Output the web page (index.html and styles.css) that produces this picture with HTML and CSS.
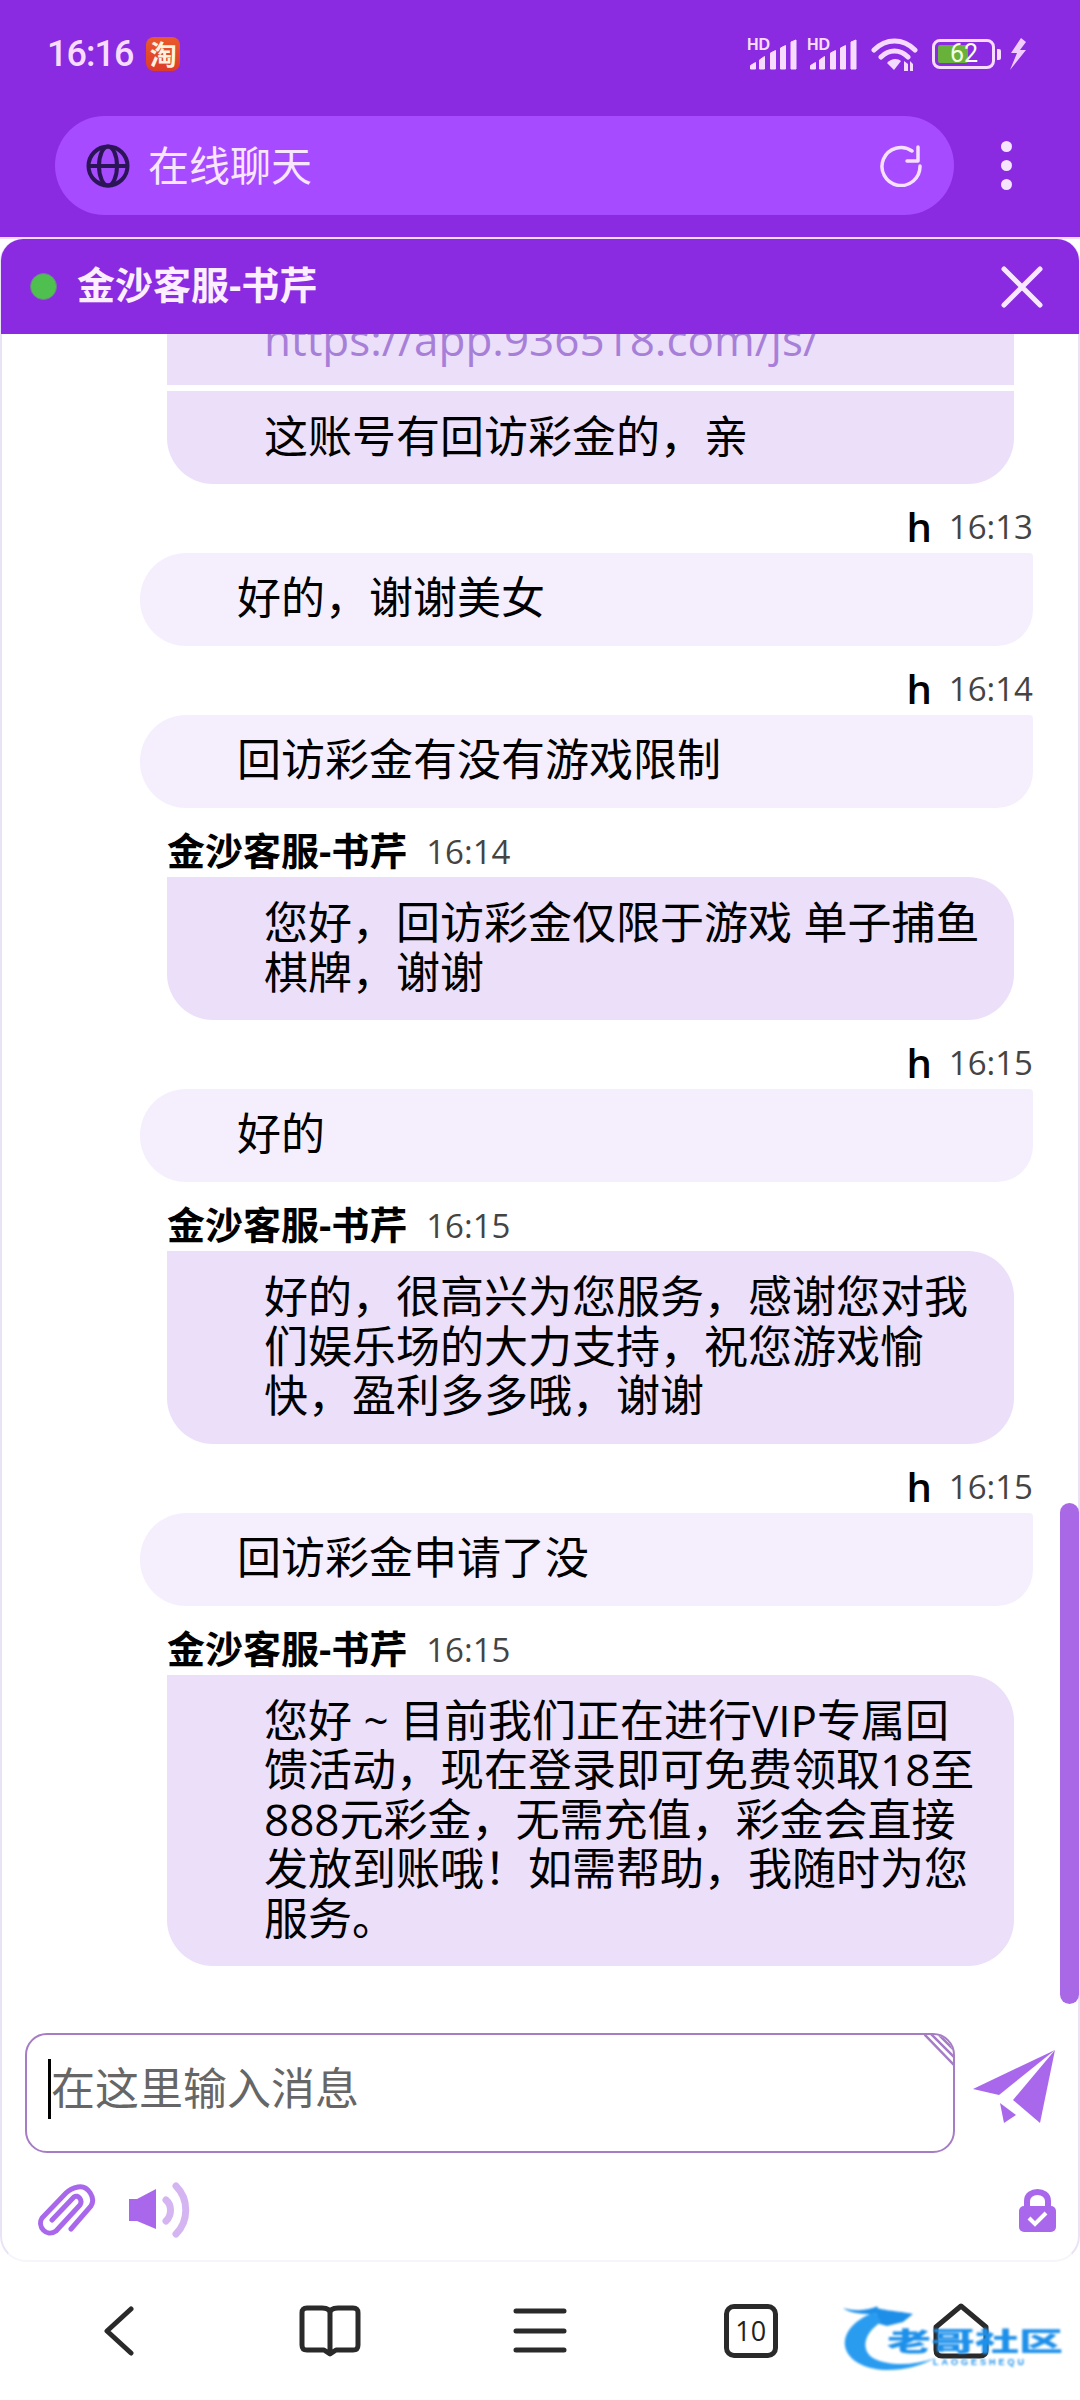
FILE: index.html
```html
<!DOCTYPE html>
<html lang="zh-CN">
<head>
  <meta charset="UTF-8" />
  <title>在线聊天</title>
  <link rel="stylesheet" href="styles.css">
</head>
<body>
  <div class="top">
    <div class="status">
      <div class="status-left">
        <span class="clock">16:16</span>
        <span class="taobao">淘</span>
      </div>
      <div class="status-right">
        <svg class="signal" width="52" height="34" viewBox="0 0 52 34">
          <text x="1" y="13" class="hd">HD</text>
          <path d="M4.5 32V28.5L9.5 25.5V32Z"/>
          <path d="M13.5 32V23L18.5 19.5V32Z"/>
          <path d="M24.5 32V16L29.5 13.5V32Z"/>
          <path d="M34.5 32V11L39.5 8.5V32Z"/>
          <path d="M45 32V5L50 3V32Z"/>
        </svg>
        <svg class="signal" width="52" height="34" viewBox="0 0 52 34">
          <text x="1" y="13" class="hd">HD</text>
          <path d="M4.5 32V28.5L9.5 25.5V32Z"/>
          <path d="M13.5 32V23L18.5 19.5V32Z"/>
          <path d="M24.5 32V16L29.5 13.5V32Z"/>
          <path d="M34.5 32V11L39.5 8.5V32Z"/>
          <path d="M45 32V5L50 3V32Z"/>
        </svg>
        <svg class="wifi" width="47" height="34" viewBox="0 0 47 34">
          <path d="M3 13C15 1 32 1 44 13M10 20C18 12 29 12 37 20" fill="none" stroke="#f5d9ff" stroke-width="5" stroke-linecap="round"/>
          <path d="M16 26C20 21 27 21 30 24L23 33Z" fill="#f5d9ff"/>
          <path d="M33 34V24L37 27V34ZM39 34V24L42 27V34" fill="#f5d9ff"/>
        </svg>
        <div class="battery">
          <div class="battery-body">
            <div class="battery-fill"></div>
            <span class="battery-num">62</span>
          </div>
          <div class="battery-nib"></div>
        </div>
        <svg class="bolt" width="18" height="32" viewBox="0 0 18 32">
          <path d="M12 0L2 15H8L1 32L17 12H11L17 4Z" fill="#f0cdfc"/>
        </svg>
      </div>
    </div>
    <div class="address-row">
      <div class="address">
        <svg width="44" height="44" viewBox="0 0 44 44" fill="none" stroke="#2c1556" stroke-width="4">
          <circle cx="22" cy="22" r="19.5"/>
          <ellipse cx="22" cy="22" rx="9" ry="19.5"/>
          <path d="M2 22H42"/>
        </svg>
        <span class="address-text">在线聊天</span>
        <svg class="reload" width="42" height="42" viewBox="0 0 42 42" fill="none" stroke="#f5e0ff" stroke-width="3.5" stroke-linecap="round" stroke-linejoin="round">
          <path d="M40 21A19 19 0 1 1 32 6"/>
          <path d="M38 2V16H27"/>
        </svg>
      </div>
      <div class="dots"><i></i><i></i><i></i></div>
    </div>
  </div>
  <div class="top-line"></div>

  <div class="panel">
    <div class="panel-head">
      <span class="online"></span>
      <span class="panel-title">金沙客服-书芹</span>
      <svg class="close" width="42" height="42" viewBox="0 0 42 42" stroke="#f8e8ff" stroke-width="5" stroke-linecap="round">
        <path d="M3 3L39 39M39 3L3 39"/>
      </svg>
    </div>

    <div class="messages">
      <div class="bubble agent link-part"><span class="link">https://app.936518.com/js/</span></div>
      <div class="bubble agent tail-part">这账号有回访彩金的，亲</div>

      <div class="meta right"><b>h</b><span class="time">16:13</span></div>
      <div class="bubble user">好的，谢谢美女</div>

      <div class="meta right"><b>h</b><span class="time">16:14</span></div>
      <div class="bubble user">回访彩金有没有游戏限制</div>

      <div class="meta left"><b>金沙客服-书芹</b><span class="time">16:14</span></div>
      <div class="bubble agent">您好，回访彩金仅限于游戏 单子捕鱼棋牌，谢谢</div>

      <div class="meta right"><b>h</b><span class="time">16:15</span></div>
      <div class="bubble user">好的</div>

      <div class="meta left"><b>金沙客服-书芹</b><span class="time">16:15</span></div>
      <div class="bubble agent">好的，很高兴为您服务，感谢您对我们娱乐场的大力支持，祝您游戏愉快，盈利多多哦，谢谢</div>

      <div class="meta right"><b>h</b><span class="time">16:15</span></div>
      <div class="bubble user">回访彩金申请了没</div>

      <div class="meta left"><b>金沙客服-书芹</b><span class="time">16:15</span></div>
      <div class="bubble agent">您好 ~ 目前我们正在进行VIP专属回馈活动，现在登录即可免费领取18至888元彩金，无需充值，彩金会直接发放到账哦！如需帮助，我随时为您服务。</div>
    </div>

    <div class="scrollbar"></div>

    <div class="composer">
      <div class="input-row">
        <div class="input">
          <span class="caret"></span>
          <span class="placeholder">在这里输入消息</span>
          <svg class="grip" width="30" height="32" viewBox="0 0 30 32" stroke="#a67cc4" stroke-width="2.5">
            <path d="M0 0L30 31M7 0L30 23M14 0L30 16M21 0L30 9"/>
          </svg>
        </div>
        <svg class="send" width="82" height="73" viewBox="0 0 82 73" fill="#a968ec">
          <path d="M82 0L0 39L26 45Z"/>
          <path d="M82 0L40 50L67 73Z"/>
          <path d="M27 53L43 65L31 73Z"/>
        </svg>
      </div>
      <div class="tool-row">
        <svg width="58" height="52" viewBox="0 0 58 52" fill="none" stroke="#a968ec" stroke-width="5" stroke-linecap="round">
          <path d="M33 45L53 22C58 14 50 1 40 3C35 4 31 6 28 9L4 34C-1 42 8 54 18 47L42 21C45 16 40 10 36 13L14 36"/>
        </svg>
        <svg class="speaker" width="62" height="56" viewBox="0 0 62 56" fill="none">
          <path d="M0 17H8L27 7V47L8 39H0Z" fill="#a968ec"/>
          <path d="M37 18C43 23 43 33 37 39" stroke="#d4b5f2" stroke-width="7" stroke-linecap="round"/>
          <path d="M47 4C60 17 60 39 47 52" stroke="#d4b5f2" stroke-width="7" stroke-linecap="round"/>
        </svg>
        <svg class="lock" width="37" height="44" viewBox="0 0 37 44">
          <path d="M8 20V13C8 1 29 1 29 13V20" fill="none" stroke="#a968ec" stroke-width="6"/>
          <rect x="0" y="18" width="37" height="26" rx="5" fill="#a968ec"/>
          <path d="M10 30L16 36L27 25" fill="none" stroke="#fff" stroke-width="4"/>
        </svg>
      </div>
    </div>
  </div>

  <div class="nav">
    <div class="nav-item">
      <svg width="30" height="50" viewBox="0 0 30 50" fill="none" stroke="#2a2a2a" stroke-width="5" stroke-linecap="round" stroke-linejoin="round">
        <path d="M27 3L3 25L27 47"/>
      </svg>
    </div>
    <div class="nav-item">
      <svg width="62" height="52" viewBox="0 0 62 52" fill="none" stroke="#2a2a2a" stroke-width="5" stroke-linejoin="round">
        <path d="M31 8C31 4 27 3 23 3H8C4 3 3 5 3 8V40C3 43 4 45 8 45H25L31 49L37 45H54C58 45 59 43 59 40V8C59 5 58 3 54 3H39C35 3 31 4 31 8V47"/>
      </svg>
    </div>
    <div class="nav-item">
      <svg width="54" height="46" viewBox="0 0 54 46" stroke="#2a2a2a" stroke-width="5" stroke-linecap="round">
        <path d="M3 3H51M3 23H51M3 42H51"/>
      </svg>
    </div>
    <div class="nav-item">
      <div class="tabs">10</div>
    </div>
    <div class="nav-item">
      <svg width="56" height="56" viewBox="0 0 56 56" fill="none" stroke="#2a2a2a" stroke-width="5" stroke-linejoin="round">
        <path d="M28 3L53 24V47C53 51 51 53 47 53H9C5 53 3 51 3 47V24Z"/>
      </svg>
    </div>

    <div class="watermark">
      <svg class="dragon" width="95" height="70" viewBox="0 0 95 70">
        <path d="M0 4C15 8 25 6 35 2C30 6 50 6 70 10L60 18L44 22L30 18L34 10C20 10 8 10 0 4Z" fill="#1e8fe8"/>
        <path d="M32 8C10 16 0 30 2 42C5 58 25 66 45 66C62 66 78 62 92 54C70 62 45 62 30 54C18 46 20 30 38 18Z" fill="#2a9cf0"/>
      </svg>
      <span class="wm-name">老哥社区</span>
      <span class="wm-sub">LAOGESHEQU</span>
    </div>
  </div>
</body>
</html>
```

FILE: styles.css
```css
* {
  box-sizing: border-box;
}

body {
  margin: 0;
  width: 1080px;
  height: 2400px;
  overflow: hidden;
  background-color: #ffffff;
  color: #000000;
  font-family: "Open Sans", "Noto Sans CJK SC", sans-serif;
}

.top {
  height: 237px;
  background-color: #8a2be2;
}

.top-line {
  height: 2px;
  background-color: #f3dcf9;
}

.status {
  display: flex;
  justify-content: space-between;
  align-items: center;
  height: 108px;
  padding: 0 53px 0 47px;
}

.status-left {
  display: flex;
  align-items: center;
  gap: 13px;
}

.clock {
  font-family: Roboto, sans-serif;
  font-size: 36px;
  font-weight: 500;
  letter-spacing: -1px;
  color: #f8dcff;
}

.taobao {
  display: flex;
  align-items: center;
  justify-content: center;
  width: 34px;
  height: 34px;
  border-radius: 8px;
  background: linear-gradient(#ea5a2c, #dc3c28);
  color: #fff3e0;
  font-family: "Noto Sans CJK SC", sans-serif;
  font-size: 27px;
  font-weight: 700;
  line-height: 34px;
}

.status-right {
  display: flex;
  align-items: center;
  gap: 8px;
}

.signal path {
  fill: #f8dcff;
  stroke: #f8dcff;
  stroke-width: 1;
  stroke-linejoin: round;
}

.hd {
  font-family: "Liberation Sans", sans-serif;
  font-size: 16px;
  font-weight: 700;
  fill: #f8dcff;
}

.wifi {
  margin: 0 6px 0 5px;
}

.battery {
  display: flex;
  align-items: center;
  gap: 2px;
}

.battery-body {
  position: relative;
  width: 63px;
  height: 30px;
  border: 3px solid #f8dcff;
  border-radius: 8px;
}

.battery-fill {
  position: absolute;
  left: 3px;
  top: 3px;
  bottom: 3px;
  width: 30px;
  border-radius: 2px;
  background-color: #68b23b;
}

.battery-num {
  position: absolute;
  left: 15px;
  top: -5px;
  font-family: Roboto, sans-serif;
  font-size: 25px;
  line-height: 34px;
  color: #f4ffe8;
}

.battery-nib {
  width: 4px;
  height: 11px;
  border-radius: 0 2px 2px 0;
  background-color: #f8dcff;
}

.address-row {
  display: flex;
  align-items: center;
  margin-top: 8px;
  padding-left: 55px;
}

.address {
  display: flex;
  align-items: center;
  width: 899px;
  height: 99px;
  padding: 0 32px 0 31px;
  border-radius: 50px;
  background-color: #a64bff;
}

.address-text {
  margin: 0 0 5px 18px;
  font-family: "Noto Sans CJK SC", sans-serif;
  font-size: 41px;
  color: #f8e6ff;
}

.reload {
  margin-left: auto;
}

.dots {
  display: flex;
  flex-direction: column;
  gap: 8px;
  margin-left: 47px;
}

.dots i {
  display: block;
  width: 11px;
  height: 11px;
  border-radius: 50%;
  background-color: #f5e4fb;
}

.panel {
  position: relative;
  display: flex;
  flex-direction: column;
  height: 2023px;
  border: 2px solid #e9e3f5;
  border-top: none;
  border-bottom-color: #f7f5fb;
  border-radius: 22px 22px 26px 26px;
  background-color: #ffffff;
}

.panel-head {
  display: flex;
  align-items: center;
  flex: none;
  height: 95px;
  margin: 0 -1px;
  padding: 0 36px 0 29px;
  border-radius: 22px 22px 0 0;
  background-color: #8a2be2;
}

.online {
  width: 27px;
  height: 27px;
  border-radius: 50%;
  background-color: #4fc04f;
  border: 1px solid #6f7f8f;
}

.panel-title {
  margin: 0 0 8px 20px;
  font-size: 38px;
  font-weight: 700;
  color: #fbeeff;
}

.close {
  margin-left: auto;
}

.messages {
  display: flex;
  flex-direction: column;
  justify-content: flex-end;
  flex: 1;
  min-height: 0;
  overflow: hidden;
  padding: 0 45px 44px 138px;
}

.bubble {
  flex: none;
  font-size: 44px;
  line-height: 49.5px;
}

.agent {
  margin-left: 27px;
  margin-right: 19px;
  padding: 21px 24px 23px 97px;
  border-radius: 0 46px 46px 46px;
  background-color: #ecdff9;
}

.user {
  padding: 20px 24px 23.5px 97px;
  border-radius: 46px 4px 36px 46px;
  background-color: #f5effd;
}

.link-part {
  padding-bottom: 20px;
  border-radius: 0;
}

.tail-part {
  margin-top: 6px;
  border-top-right-radius: 0;
}

.link {
  color: #a87fd8;
}

.meta {
  display: flex;
  align-items: center;
  flex: none;
  gap: 19px;
  height: 44px;
  margin-top: 25px;
}

.meta b {
  font-size: 38px;
  font-weight: 700;
}

.meta.right {
  justify-content: flex-end;
  gap: 17px;
  padding-bottom: 8px;
}

.meta.right b {
  font-size: 40px;
  font-weight: 600;
  line-height: 36px;
}

.meta.left {
  padding-left: 27px;
  padding-bottom: 6px;
}

.meta.left b {
  margin-bottom: 4px;
  line-height: 36px;
}

.time {
  font-size: 33px;
  line-height: 36px;
  color: #444444;
}

.scrollbar {
  position: absolute;
  top: 1264px;
  right: -1px;
  width: 19px;
  height: 501px;
  border-radius: 10px;
  background-color: #a968e6;
}

.composer {
  flex: none;
  height: 250px;
  padding: 23px 22px 0 23px;
}

.input-row {
  display: flex;
  align-items: center;
}

.input {
  position: relative;
  display: flex;
  align-items: center;
  flex: none;
  width: 930px;
  height: 120px;
  padding-left: 24px;
  border: 2px solid #a67cc4;
  border-radius: 22px;
  overflow: hidden;
}

.caret {
  position: absolute;
  left: 21px;
  top: 24px;
  width: 3px;
  height: 60px;
  background-color: #000000;
}

.placeholder {
  margin-bottom: 14px;
  font-family: "Noto Sans CJK SC", sans-serif;
  font-size: 44px;
  color: #666666;
}

.grip {
  position: absolute;
  right: -1px;
  top: -1px;
}

.send {
  margin: -13px 0 0 18px;
}

.tool-row {
  display: flex;
  align-items: center;
  margin-top: 29px;
  padding: 0 0 0 13px;
}

.speaker {
  margin-left: 33px;
}

.lock {
  margin-left: auto;
}

.nav {
  position: relative;
  display: grid;
  grid-template-columns: repeat(5, 210.5px);
  height: 138px;
  padding: 41px 0 0 14px;
  align-items: start;
}

.nav-item {
  display: flex;
  justify-content: center;
  height: 56px;
  align-items: center;
}

.tabs {
  width: 54px;
  height: 54px;
  border: 5px solid #2a2a2a;
  border-radius: 10px;
  font-size: 27px;
  line-height: 44px;
  text-align: center;
  color: #222222;
}

.watermark {
  position: absolute;
  left: 843px;
  top: 42px;
  width: 222px;
  height: 72px;
  color: #1e90ea;
  filter: blur(0.8px);
}

.dragon {
  position: absolute;
  left: 0;
  top: 0;
}

.wm-name {
  position: absolute;
  left: 44px;
  top: 14px;
  font-family: "Noto Sans CJK SC", sans-serif;
  font-size: 44px;
  font-weight: 900;
  line-height: 44px;
  white-space: nowrap;
  transform: scaleY(0.6);
}

.wm-sub {
  position: absolute;
  left: 90px;
  top: 53px;
  font-family: "Liberation Sans", sans-serif;
  font-size: 9px;
  font-weight: 700;
  letter-spacing: 3px;
  white-space: nowrap;
}
```
